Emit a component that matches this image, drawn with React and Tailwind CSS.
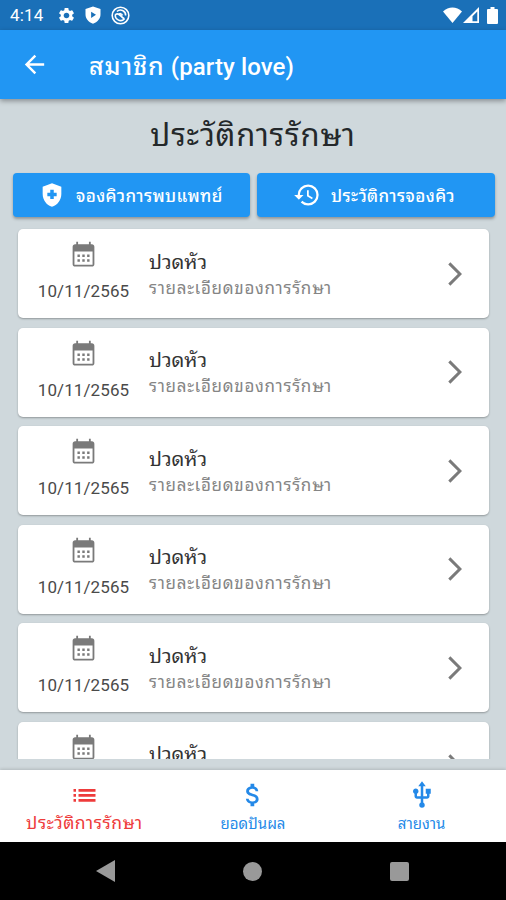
import clsx from "clsx";
import {
  MdArrowBack,
  MdArrowForwardIos,
  MdAttachMoney,
  MdHealthAndSafety,
  MdHistory,
  MdSettings,
  MdUsb,
} from "react-icons/md";

const visits = Array.from({ length: 6 }, (_, i) => ({
  id: i,
  date: "10/11/2565",
  title: "ปวดหัว",
  detail: "รายละเอียดของการรักษา",
}));

const tabs = [
  { label: "ประวัติการรักษา", Icon: ListIcon, active: true },
  { label: "ยอดปันผล", Icon: MdAttachMoney },
  { label: "สายงาน", Icon: MdUsb },
];

function ListIcon({ size }) {
  return (
    <svg width={size} height={size} viewBox="0 0 30 30" fill="currentColor">
      <path d="M4.500 9h2.500v2.700h-2.500zM4.500 14h2.500v2.700h-2.500zM4.500 19h2.500v2.700h-2.500zM9.500 9H26.500v2.700H9.500zM9.500 14H26.500v2.700H9.500zM9.500 19H26.500v2.700H9.500z" />
    </svg>
  );
}

function CalendarIcon({ className }) {
  return (
    <svg className={className} width="29" height="29" viewBox="0 0 24 24" fill="currentColor">
      <path fillRule="evenodd" d="M19 3.500h-1V1.500h-1.500v2h-9v-2H6v2H5c-1.100 0-2 .9-2 2V20c0 1.100.9 2 2 2h14c1.100 0 2-.9 2-2V5.500c0-1.100-.9-2-2-2ZM19.500 20.500h-15V9.500h15v11Z" />
      <path d="M7 12h2v2H7zM11 12h2v2h-2zM15 12h2v2h-2zM7 16h2v2H7zM11 16h2v2h-2zM15 16h2v2h-2z" />
    </svg>
  );
}

function StatusBar() {
  return (
    <div className="h-[30px] shrink-0 bg-[#1a70b8] text-white flex items-center pl-[10px] pr-[8px]">
      <span className="w-[47px] text-[17px] leading-none tracking-[0.200px]">4:14</span>
      <MdSettings size={19} />
      <svg className="ml-[8px]" width="18" height="18" viewBox="0 0 24 24" fill="currentColor">
        <path fillRule="evenodd" d="M12 .5 2 4v7c0 6 4 10.500 10 12.500 6-2 10-6.500 10-12.500V4L12 .5ZM9.500 7.500v8.500l6.500-4.200-6.500-4.300Z" />
      </svg>
      <svg className="ml-[9px]" width="19" height="19" viewBox="0 0 24 24" fill="none" stroke="currentColor" strokeWidth="2">
        <circle cx="12" cy="12" r="10.500" />
        <path d="M17 16A6.500 6.500 0 0 1 5.800 10M7.500 7A6.500 6.500 0 0 1 18.500 12" />
        <path d="M6 10.500c4.500-3 6 3.500 11 5.500M9.500 11.500c1-2.500 4-2.500 5 .5" />
      </svg>
      <div className="flex-1" />
      <svg width="19" height="16" viewBox="0 0 19 16" fill="currentColor">
        <path d="M0 4.500C5.500-.7 13.500-.7 19 4.500L9.500 16 0 4.500Z" />
      </svg>
      <svg className="ml-[1px]" width="16" height="16" viewBox="0 0 16 16" fill="currentColor">
        <path fillRule="evenodd" d="M16 0v16H0L16 0ZM14.300 4.500 9.500 9.300v5h4.800V4.500Z" />
      </svg>
      <svg className="ml-[8px]" width="11" height="17" viewBox="0 0 11 17" fill="currentColor">
        <path d="M3.500 0h4v2H10q1 0 1 1v13q0 1-1 1H1q-1 0-1-1V3q0-1 1-1h2.500V0Z" />
      </svg>
    </div>
  );
}

function ActionButton({ Icon, children, className }) {
  return (
    <button className={clsx("h-[44px] shrink-0 flex items-center rounded-[4px] bg-[#2196f3] text-white shadow-[0_2px_3px_rgba(0,0,0,0.3)]", className)}>
      <Icon size={28} className="shrink-0" />
      <span className="ml-[10px] mt-[3px] text-[17px] font-medium tracking-[0.400px] whitespace-nowrap">{children}</span>
    </button>
  );
}

function VisitCard({ visit }) {
  return (
    <div className="h-[89px] shrink-0 flex items-center rounded-[5px] bg-white shadow-[0_1px_2px_rgba(0,0,0,0.3)]">
      <div className="w-[131px] h-full pt-[11px] flex flex-col items-center">
        <CalendarIcon className="shrink-0 text-[#7a7a7a]" />
        <span className="mt-[10px] text-[17px] leading-[24px] tracking-[0.100px] text-[#4a4a4a]">{visit.date}</span>
      </div>
      <div className="flex-1 pt-[2px]">
        <p className="text-[20px] leading-[26px] text-[#333]">{visit.title}</p>
        <p className="text-[17px] leading-[26px] tracking-[0.700px] text-[#858585]">{visit.detail}</p>
      </div>
      <MdArrowForwardIos size={28} className="mr-[20px] text-[#7a7a7a]" />
    </div>
  );
}

function BottomTabs() {
  return (
    <nav className="h-[72px] shrink-0 flex bg-white shadow-[0_-1px_3px_rgba(0,0,0,0.15)]">
      {tabs.map(({ label, Icon, active }) => (
        <button
          key={label}
          className={clsx("flex-1 pt-[10px] flex flex-col items-center", active ? "text-[#ee3b3b]" : "text-[#2489e8]")}
        >
          <Icon size={30} />
          <span className={clsx("leading-[24px] whitespace-nowrap", active ? "mt-[1px] text-[17.500px] tracking-[0.500px]" : "mt-[2px] text-[15px]")}>{label}</span>
        </button>
      ))}
    </nav>
  );
}

function SystemNav() {
  return (
    <div className="h-[58px] shrink-0 flex items-center justify-between bg-black pl-[96px] pr-[97px] text-[#999]">
      <svg width="19" height="22" viewBox="0 0 19 22" fill="currentColor">
        <path d="M19 0v22L0 11 19 0Z" />
      </svg>
      <div className="size-[19px] rounded-full bg-[#999]" />
      <div className="size-[19px] rounded-[2px] bg-[#999]" />
    </div>
  );
}

export default function App() {
  return (
    <div className="w-[506px] h-[900px] flex flex-col overflow-hidden bg-[#cfd8dc] font-[Roboto,'Noto_Sans_Thai_Looped','Noto_Sans_Thai','Noto_Sans',sans-serif]">
      <StatusBar />
      <header className="relative h-[69px] shrink-0 flex items-center bg-[#2196f3] pl-[20px] text-white shadow-[0_2px_5px_rgba(0,0,0,0.35)]">
        <MdArrowBack size={29} />
        <h1 className="ml-[40px] mt-[4px] text-[24px] font-medium tracking-[0.100px] whitespace-nowrap">
          <span className="text-[25px] tracking-[0.900px]">สมาชิก</span> (party love)
        </h1>
      </header>

      <main className="flex-1 min-h-0 flex flex-col">
        <h2 className="h-[74px] shrink-0 flex items-center justify-center text-[31px] tracking-[0.800px] text-[#24282a] whitespace-nowrap">ประวัติการรักษา</h2>
        <div className="flex gap-[7px] pl-[13px]">
          <ActionButton Icon={MdHealthAndSafety} className="w-[237px] pl-[25px]">จองคิวการพบแพทย์</ActionButton>
          <ActionButton Icon={MdHistory} className="w-[238px] pl-[36px]">ประวัติการจองคิว</ActionButton>
        </div>
        <div className="mt-[8px] flex-1 min-h-0 overflow-hidden pl-[18px] pr-[17px] pt-[4px] mb-[11px] flex flex-col gap-[9.500px]">
          {visits.map((visit) => (
            <VisitCard key={visit.id} visit={visit} />
          ))}
        </div>
      </main>

      <BottomTabs />
      <SystemNav />
    </div>
  );
}
